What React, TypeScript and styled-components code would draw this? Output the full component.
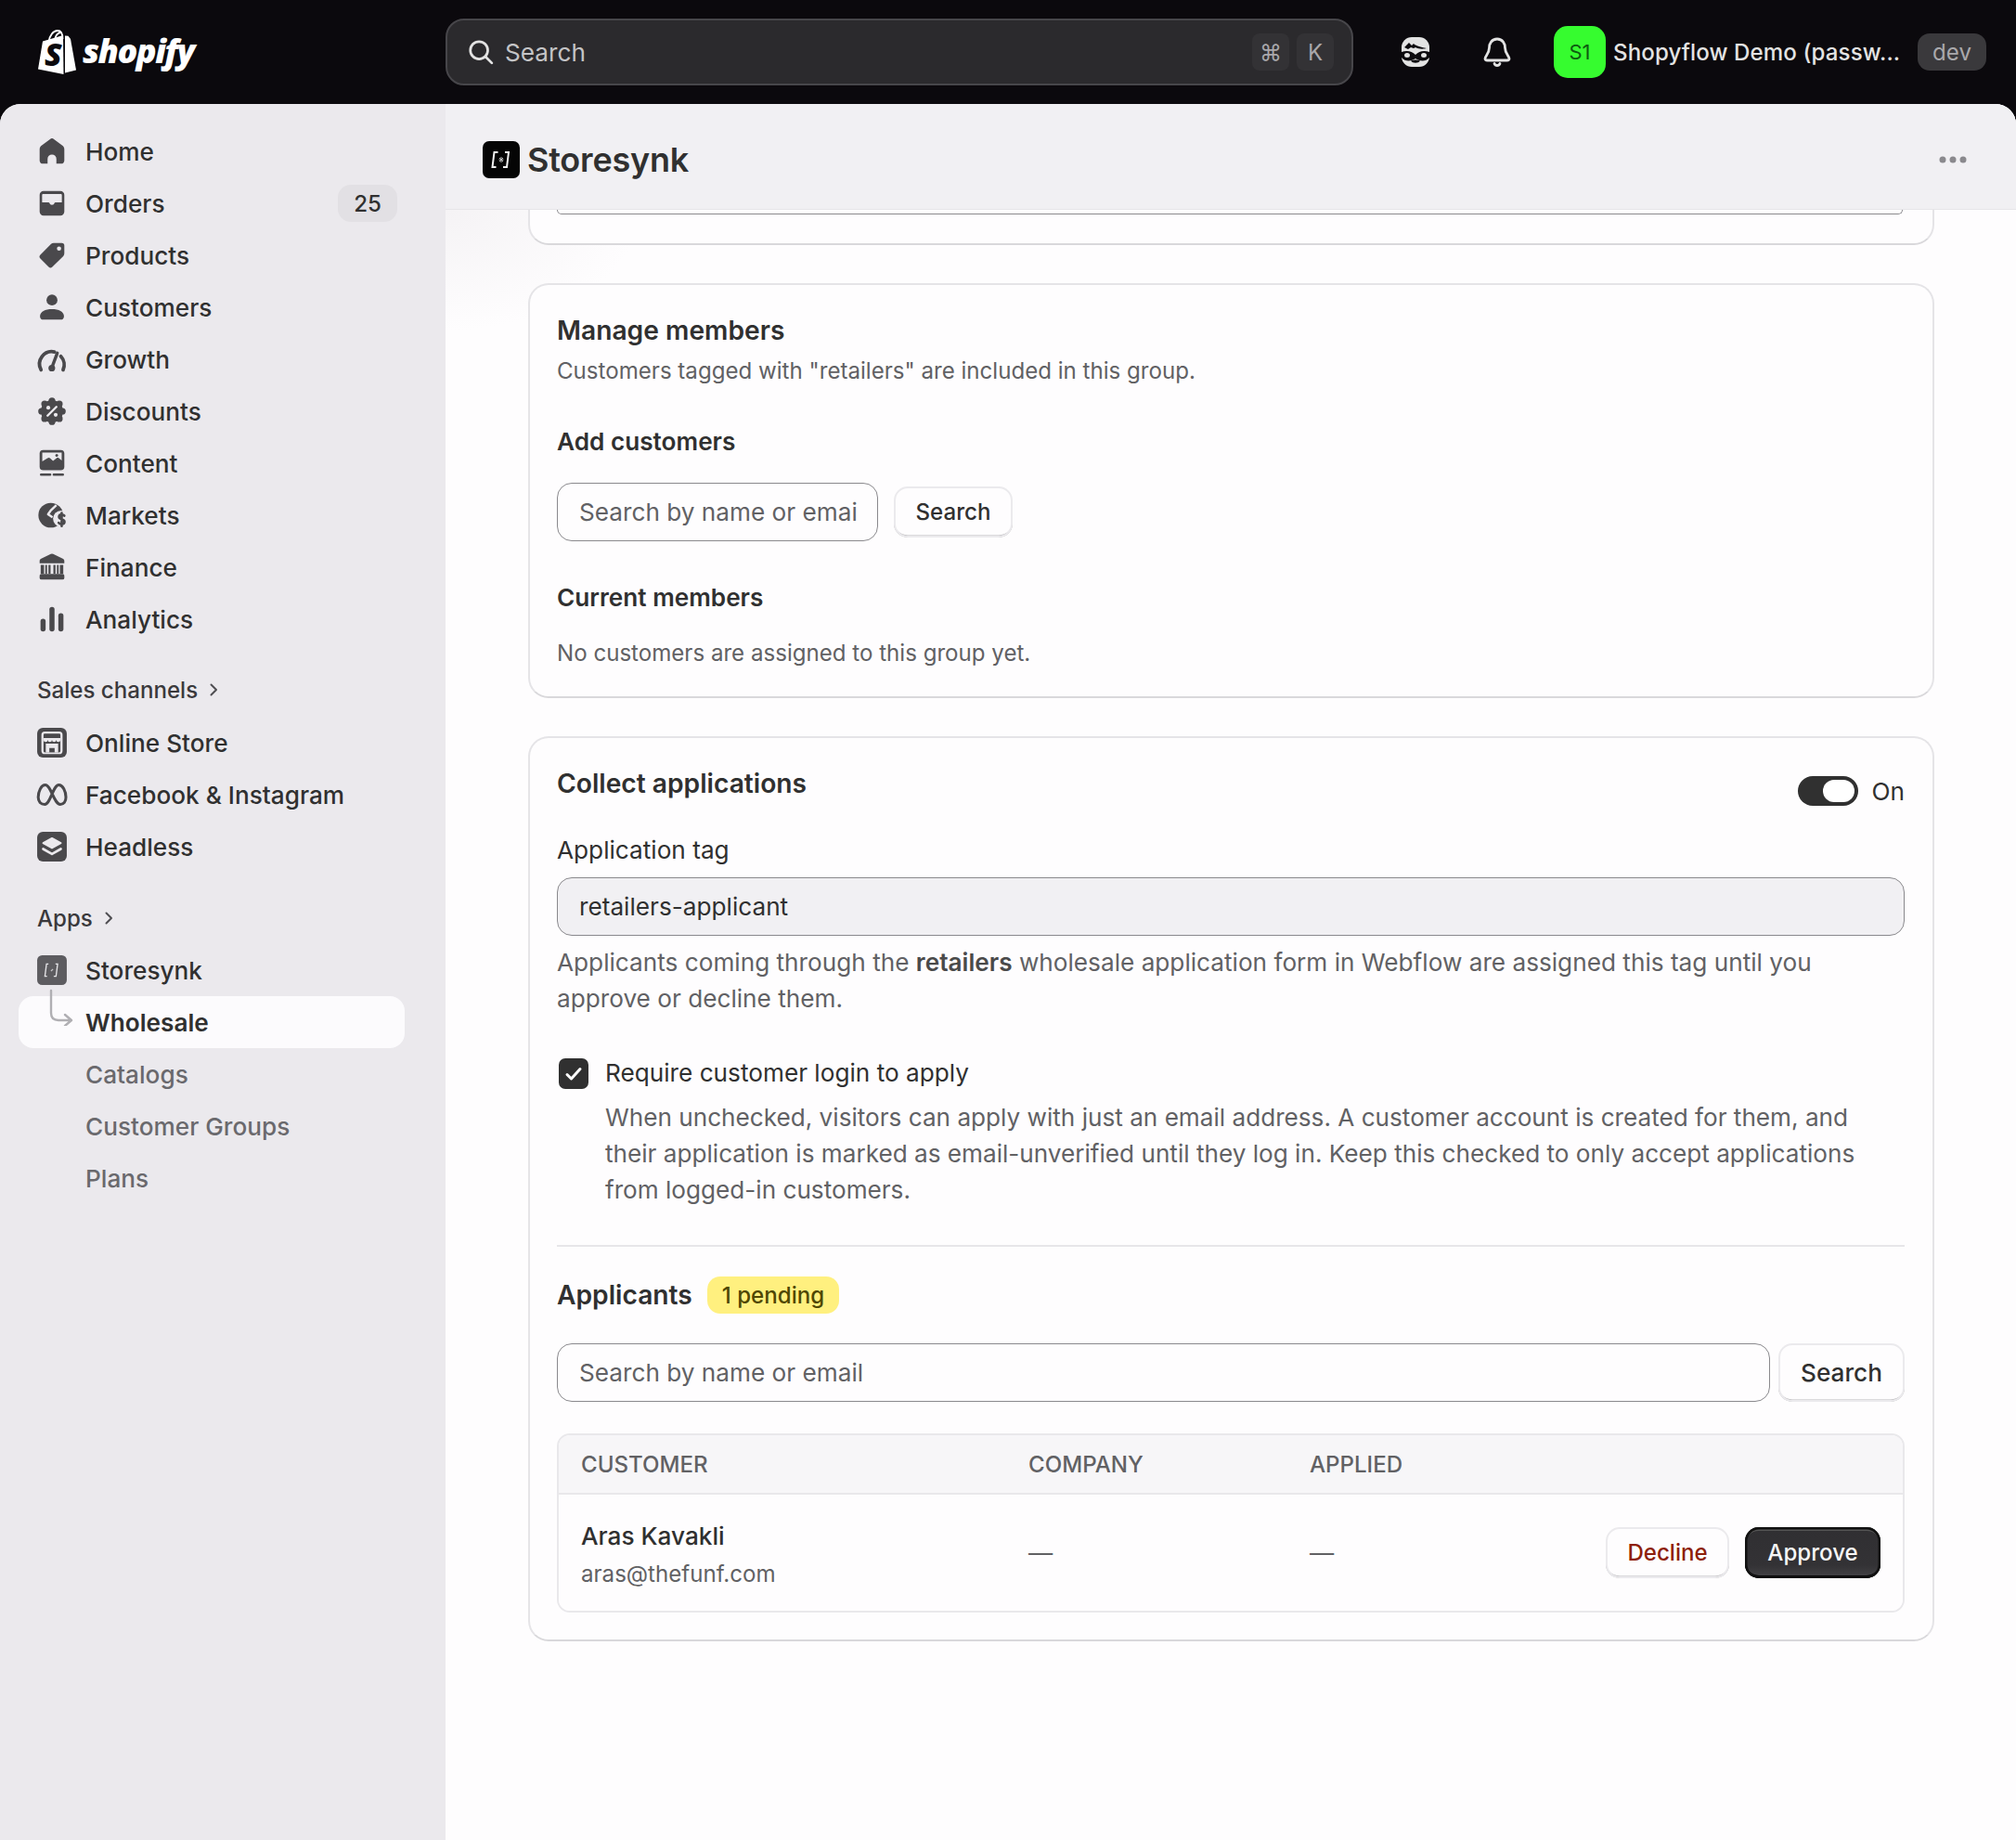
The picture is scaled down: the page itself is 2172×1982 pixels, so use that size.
import React from "react";
import styled, { createGlobalStyle } from "styled-components";

const Global = createGlobalStyle`
  html, body { margin: 0; padding: 0; background: #0b090d; }
  * { box-sizing: border-box; }
  body { font-family: Inter, "Liberation Sans", sans-serif; color: #303030; }
  input { font-family: inherit; }
`;

const Shell = styled.div`
  width: 2172px; height: 1982px; display: flex; flex-direction: column; background: #0b090d; overflow: hidden;
`;
const TopBar = styled.header`
  height: 112px; flex: none; display: flex; align-items: center; position: relative;
`;
const LogoWrap = styled.div`
  width: 480px; flex: none; padding-left: 40px; display: flex; align-items: center; gap: 5px;
`;
const Wordmark = styled.span`
  font-family: "Open Sans", sans-serif; font-style: italic; font-weight: 800; font-size: 36px; letter-spacing: -1.5px; color: #fff; line-height: 1; margin-top: -3px;
`;
const GlobalSearch = styled.div`
  width: 978px; height: 72px; flex: none; background: #2b2a2d; border: 2px solid #47464a; border-radius: 20px;
  display: flex; align-items: center; padding: 0 19px 0 21px; gap: 11px;
`;
const GlobalSearchInput = styled.input`
  flex: 1; min-width: 0; background: none; border: 0; outline: 0; padding: 0; font-size: 26.2px; color: #c4c4c6;
  &::placeholder { color: #c4c4c6; opacity: 1; }
`;
const Kbd = styled.kbd`
  width: 40px; height: 40px; border-radius: 8px; background: #333235; color: #a9a8ab; font-family: Inter, "DejaVu Sans", sans-serif; font-size: 24px;
  display: flex; align-items: center; justify-content: center; margin-left: -3px;
`;
const TopIcon = styled.div<{ $ml: number }>`
  width: 36px; height: 36px; flex: none; margin-left: ${p => p.$ml}px; display: flex; align-items: center; justify-content: center; color: #e3e3e3;
`;
const StoreBadge = styled.div`
  width: 56px; height: 56px; flex: none; margin-left: 43px; border-radius: 15px; background: #36fc2f; color: #0d5a10; font-size: 22px;
  display: flex; align-items: center; justify-content: center;
`;
const StoreName = styled.span`
  width: 310px; margin-left: 8px; flex: none; color: #e3e3e3; font-size: 24.1px; font-weight: 500; letter-spacing: .1px; white-space: nowrap;
`;
const DevChip = styled.span`
  width: 74px; height: 40px; margin-left: 18px; flex: none; border-radius: 13px; background: #3a393c; color: #a9a8ab; font-size: 24.1px;
  display: flex; align-items: center; justify-content: center;
`;
const Body = styled.div`
  flex: 1; display: flex; min-height: 0; border-radius: 22px 22px 0 0; overflow: hidden; background: #fefdfe;
`;
const Sidebar = styled.nav`
  width: 480px; flex: none; background: #ebe9ed; padding-top: 23px;
`;
const NavRow = styled.div<{ $active?: boolean; $muted?: boolean }>`
  height: 56px; margin: 0 44px 0 20px; padding-left: 17px; display: flex; align-items: center; gap: 17px; position: relative;
  font-size: 26.2px; font-weight: ${p => (p.$active ? 600 : 500)}; color: ${p => (p.$muted ? "#6a696d" : "#303030")};
  background: ${p => (p.$active ? "#fcfbfd" : "transparent")}; border-radius: 16px;
`;
const NavIcon = styled.svg`
  width: 38px; height: 38px; flex: none; color: #4a494c;
`;
const NavSpacer = styled.span`
  width: 38px; flex: none;
`;
const NavLabel = styled.span`
  flex: 1; white-space: nowrap;
`;
const CountChip = styled.span`
  width: 64px; height: 40px; margin-right: 8px; border-radius: 14px; background: #e2e0e4; font-size: 24.1px; font-weight: 500;
  display: flex; align-items: center; justify-content: center;
`;
const NavHeading = styled.div<{ $top: number; $bottom: number }>`
  height: 40px; margin: ${p => p.$top}px 0 ${p => p.$bottom}px 40px; display: flex; align-items: center; gap: 8px; font-size: 24.1px; font-weight: 500; color: #3a393c;
`;
const Connector = styled.svg`
  position: absolute; left: 28px; top: -8px; width: 36px; height: 40px;
`;
const Main = styled.main`
  flex: 1; display: flex; flex-direction: column; min-width: 0;
  background: radial-gradient(ellipse 210px 130px at 0 114px, #f5f3f5 0%, #fefdfe 100%);
`;
const PageHeader = styled.div`
  height: 114px; flex: none; background: #f1f0f3; border-bottom: 1px solid #e6e5e8; display: flex; align-items: center; padding: 6px 53px 0 40px;
  position: relative; z-index: 1;
`;
const PageTitle = styled.h1`
  flex: 1; margin: 0 0 0 8px; font-size: 36px; font-weight: 600; color: #303030; letter-spacing: -.2px;
`;
const Content = styled.div`
  padding: 0 88px 0 89px; display: flex; flex-direction: column; gap: 41px;
`;
const Card = styled.section<{ $cut?: boolean }>`
  background: #fefdfe; border: 2px solid #e5e4e7; border-bottom-color: #d9d8db; border-radius: 22px; padding: 31px 30px 29px 29px;
  ${p => p.$cut && "border-top: 0; border-radius: 0 0 22px 22px; padding: 0 30px 0 29px; height: 38px;"}
`;
const CutField = styled.div`
  height: 5px; margin-right: 2px; border: 1.5px solid #8a898d; border-top: 0; border-radius: 0 0 14px 14px;
`;
const Heading = styled.h2`
  margin: 0; font-size: 28.2px; line-height: 36px; font-weight: 600; color: #303030;
`;
const SubHeading = styled.h3<{ $top: number }>`
  margin: ${p => p.$top}px 0 0; font-size: 26.2px; line-height: 36px; font-weight: 600; color: #303030; position: relative; top: 1px;
`;
const Muted = styled.p<{ $top: number }>`
  margin: ${p => p.$top}px 0 0; font-size: 24.1px; line-height: 36px; color: #616164; position: relative; top: 1px;
`;
const FieldRow = styled.div<{ $top: number; $gap: number }>`
  margin-top: ${p => p.$top}px; display: flex; align-items: center; gap: ${p => p.$gap}px;
`;
const TextInput = styled.input<{ $w?: number; $filled?: boolean }>`
  height: 63px; width: ${p => (p.$w ? `${p.$w}px` : "100%")}; flex: ${p => (p.$w ? "none" : "1")}; min-width: 0;
  padding: 0 22px 0 23px; border: 1.5px solid #8a898d; border-radius: 16px; outline: 0; font-size: 26.2px;
  background: ${p => (p.$filled ? "#f1f0f3" : "#fefdfe")}; color: #303030;
  &::placeholder { color: #616164; opacity: 1; }
`;
const Button = styled.button<{ $h: number; $w: number; $size?: number; $danger?: boolean; $primary?: boolean }>`
  width: ${p => p.$w}px; height: ${p => p.$h}px; flex: none; border: 0; border-radius: 15px; font-family: inherit; font-weight: 500;
  font-size: ${p => p.$size ?? 24.1}px; padding: 0; background: ${p => (p.$primary ? "linear-gradient(#302f32, #333235 75%, #454447)" : "#fefdfe")};
  color: ${p => (p.$primary ? "#f6f6f6" : p.$danger ? "#8e1f0b" : "#303030")};
  box-shadow: ${p => (p.$primary
    ? "inset 0 0 0 2.5px #111, inset 0 -3px 0 #000, inset 0 4px 0 #555"
    : "inset 0 0 0 2px #ebeaed, inset 0 -2.5px 0 #b8b7ba")};
`;
const TitleRow = styled.div`
  display: flex; align-items: flex-start; justify-content: space-between;
`;
const SwitchGroup = styled.div`
  margin-top: 8px; display: flex; align-items: center; gap: 15px; font-size: 26.2px; color: #303030; height: 36px;
`;
const SwitchTrack = styled.div`
  width: 65px; height: 32px; border-radius: 16px; background: #303030; padding: 4px; display: flex; justify-content: flex-end;
`;
const SwitchThumb = styled.div`
  width: 34px; height: 24px; border-radius: 12px; background: #fff;
`;
const Label = styled.div`
  margin-top: 28px; font-size: 26.2px; line-height: 36px; color: #303030;
`;
const Help = styled.p`
  margin: 9px 0 0; font-size: 26.2px; line-height: 39px; color: #616164;
  strong { font-weight: 600; color: #4a4a4a; }
`;
const CheckRow = styled.div`
  margin-top: 41px; display: grid; grid-template-columns: 32px 1fr; column-gap: 18px; padding-left: 2px;
`;
const CheckBox = styled.div`
  width: 32px; height: 33px; border-radius: 7px; background: #303030; display: flex; align-items: center; justify-content: center; margin-top: 4px;
`;
const CheckLabel = styled.div`
  font-size: 26.2px; line-height: 39px; color: #303030;
`;
const CheckHelp = styled.p`
  grid-column: 2; margin: 9px 0 0; font-size: 26.15px; line-height: 39px; color: #616164;
`;
const Divider = styled.hr`
  margin: 40px 0 0; border: 0; height: 2px; background: #e7e6e9;
`;
const ApplicantsRow = styled.div`
  margin-top: 32px; height: 40px; display: flex; align-items: center; gap: 16px;
`;
const ApplicantsTitle = styled.h3`
  margin: 0; font-size: 28.2px; font-weight: 600; color: #303030;
`;
const PendingBadge = styled.span`
  height: 40px; padding: 0 16px; border-radius: 14px; background: #fff07f; color: #4f4700; font-size: 24.1px; font-weight: 500; display: flex; align-items: center;
`;
const Table = styled.div`
  margin-top: 34px; border: 2px solid #e9e8eb; border-radius: 14px; overflow: hidden;
`;
const TableGrid = styled.div<{ $head?: boolean }>`
  display: grid; grid-template-columns: 482px 303px 1fr; align-items: center; padding: 0 24px;
  height: ${p => (p.$head ? 64 : 125)}px;
  background: ${p => (p.$head ? "#f7f6f8" : "#fefdfe")};
  border-bottom: ${p => (p.$head ? "2px solid #e9e8eb" : "0")};
`;
const HeadCell = styled.span`
  font-size: 24.1px; font-weight: 500; color: #616164; text-transform: uppercase;
`;
const CustomerCell = styled.div`
  padding-top: 4px;
`;
const CustomerName = styled.div`
  font-size: 26.2px; line-height: 40px; font-weight: 500; color: #303030;
`;
const CustomerEmail = styled.div`
  margin-top: 2px; font-size: 24.1px; line-height: 38px; color: #616164;
`;
const Dash = styled.span`
  font-size: 26.2px; color: #616164;
`;
const RowActions = styled.div`
  display: flex; align-items: center; justify-content: space-between;
`;
const ActionButtons = styled.div`
  margin-left: auto; display: flex; gap: 17px;
`;

const Ico: React.FC<{ children: React.ReactNode }> = ({ children }) => (
  <NavIcon viewBox="0 0 20 20" fill="currentColor">{children}</NavIcon>
);

const BG = "#ebe9ed";
const icons: Record<string, React.ReactNode> = {
  home: <path d="M8.900 3.100a1.800 1.800 0 0 1 2.200 0l4.800 3.600c.7.500 1.100 1.300 1.100 2.100v6.400c0 1-.8 1.800-1.800 1.800h-2.700v-2.700a2.500 2.500 0 0 0-5 0V17H4.800c-1 0-1.800-.8-1.800-1.800V8.800c0-.8.4-1.600 1.100-2.100z" />,
  orders: <path fillRule="evenodd" d="M5.200 3h9.600A2.200 2.200 0 0 1 17 5.200v9.600a2.200 2.200 0 0 1-2.200 2.200H5.200A2.200 2.200 0 0 1 3 14.800V5.200A2.200 2.200 0 0 1 5.200 3zM5 4.700c-.4 0-.6.300-.6.600v4.200H8c.3 0 .5.200.6.400.2.700.7 1 1.400 1s1.200-.3 1.400-1c.1-.2.3-.4.6-.4h3.600V5.300c0-.3-.2-.6-.6-.6z" />,
  products: <path fillRule="evenodd" d="M11 3h4.500A1.500 1.500 0 0 1 17 4.500V9c0 .6-.2 1.100-.6 1.500l-6.200 6.100a1.500 1.500 0 0 1-2.100 0l-4.700-4.700a1.500 1.500 0 0 1 0-2.100l6.100-6.200c.4-.4.900-.6 1.500-.6zm3 2a1.200 1.200 0 1 0 0 2.400A1.200 1.200 0 0 0 14 5z" />,
  customers: <><circle cx="10" cy="5.900" r="3.100" /><path d="M3.200 15.200c0-2.700 3-4.100 6.800-4.100s6.800 1.400 6.800 4.100c0 1-.8 1.800-1.800 1.800H5c-1 0-1.800-.8-1.800-1.800z" /></>,
  growth: <><path d="M3.800 16a7 7 0 0 1 7.600-10.200M15 8.300a7 7 0 0 1 1.300 7.700" fill="none" stroke="currentColor" strokeWidth="2" strokeLinecap="round" /><path d="M13 6.500l-3 8" stroke="currentColor" strokeWidth="1.800" strokeLinecap="round" /><circle cx="9.900" cy="15" r="1.900" /></>,
  discounts: <><circle cx="10" cy="10" r="6.300" />{[0, 45, 90, 135, 180, 225, 270, 315].map(a => <circle key={a} cx={10 + 5.9 * Math.cos(a * Math.PI / 180)} cy={10 + 5.9 * Math.sin(a * Math.PI / 180)} r="1.900" />)}<circle cx="7.900" cy="8" r="1.100" fill={BG} /><circle cx="12.100" cy="12" r="1.100" fill={BG} /><path d="M12.500 7.500l-5 5" stroke={BG} strokeWidth="1.300" strokeLinecap="round" /></>,
  content: <><rect x="3" y="2.500" width="14" height="11.500" rx="2" /><path d="M4.500 4h11v4.400l-1.600-1.300c-.4-.3-.9-.3-1.300 0l-2 1.600-1.700-1.600c-.4-.4-1-.4-1.400 0L4.500 9z" fill={BG} /><circle cx="12.700" cy="5.500" r=".8" /><path d="M3.800 16.500h5.200M11 16.500h5.200" stroke="currentColor" strokeWidth="1.300" strokeLinecap="round" /></>,
  markets: <><circle cx="9.300" cy="10" r="7" /><circle cx="15.200" cy="12" r="4.600" fill={BG} /><path d="M12.500 4.300 9.300 7.300 7.800 9.500l2.500 1.700" stroke={BG} strokeWidth="1.300" fill="none" strokeLinejoin="round" /><path d="M17 10.300c-.5-.8-3-1-3 .6s3.100 1.100 3.100 2.800c0 1.700-2.700 1.600-3.300.6M15.500 8.700v7.500" fill="none" stroke="currentColor" strokeWidth="1.400" strokeLinecap="round" /></>,
  finance: <><path d="M9.300 2.500a1.600 1.600 0 0 1 1.400 0l5.400 2.600c.6.300.9.800.9 1.400v1.300H3V6.500c0-.6.300-1.100.9-1.400z" /><rect x="3" y="13.800" width="14" height="3.200" rx="1" /><rect x="3.600" y="8.700" width="1.900" height="5" /><rect x="6.200" y="8.700" width="1" height="5" /><rect x="8" y="8.700" width="1.200" height="5" /><rect x="10.800" y="8.700" width="1.200" height="5" /><rect x="12.800" y="8.700" width="1" height="5" /><rect x="14.500" y="8.700" width="1.900" height="5" /></>,
  analytics: <><rect x="3.500" y="9.800" width="2.900" height="7.200" rx="1.450" /><rect x="8.550" y="3" width="2.900" height="14" rx="1.450" /><rect x="13.600" y="6.600" width="2.900" height="10.400" rx="1.450" /></>,
  store: <><rect x="1.600" y="1.600" width="16.800" height="16.800" rx="3.200" /><rect x="4" y="3.700" width="12" height="12.800" rx="1.900" fill={BG} /><rect x="5.200" y="4.900" width="9.600" height="10.600" rx=".7" /><path d="M5.200 7.400h9.600v1a1.200 1.200 0 0 1-2.400 0 1.200 1.200 0 0 1-2.400 0 1.200 1.200 0 0 1-2.400 0 1.200 1.200 0 0 1-2.400 0z" fill={BG} /><path d="M6.500 10.500h7v5h-2v-2.500h-3v2.500h-2z" fill={BG} /></>,
  meta: <path d="M5.900 15.500c-2.200 0-3.700-1.500-3.700-4 0-3.300 1.700-7 4-7 3.200 0 5 11 8.500 11 2 0 3.200-1.600 3.200-4 0-3.300-1.800-7-4-7-3.300 0-4.800 11-8 11z" fill="none" stroke="currentColor" strokeWidth="1.600" strokeLinejoin="round" />,
  headless: <><rect x="1.600" y="1.600" width="16.800" height="16.800" rx="3.200" /><path d="M10 5.200l5 2.800-5 2.800L5 8z" fill={BG} stroke={BG} strokeWidth="1" strokeLinejoin="round" /><path d="M5 11.300l5 2.800 5-2.800" fill="none" stroke={BG} strokeWidth="1.400" strokeLinejoin="round" strokeLinecap="round" /></>,
  app: <><rect x="1.600" y="1.600" width="16.800" height="16.800" rx="2.800" fill="#5d5c60" /><path d="M8 6.500H6.900L6 13.500h1.200M12 6.500h1.200l-.9 7H11" fill="none" stroke="#e6e5e8" strokeWidth=".7" /><path d="M9.400 10.500l1.200-1" stroke="#c7c6c9" strokeWidth=".6" /></>,
};

const Chevron = () => (
  <svg width="18" height="18" viewBox="0 0 18 18" fill="none" stroke="#4f4e52" strokeWidth="2" strokeLinecap="round" strokeLinejoin="round"><path d="M6.500 3.500 12 9l-5.500 5.500" /></svg>
);

const Item: React.FC<{ icon?: string; label: string; count?: string; active?: boolean; muted?: boolean; tree?: boolean }> = ({ icon, label, count, active, muted, tree }) => (
  <NavRow $active={active} $muted={muted}>
    {tree && (
      <Connector viewBox="0 0 36 40" fill="none" stroke="#b0afb3" strokeWidth="2.400" strokeLinecap="round" strokeLinejoin="round">
        <path d="M7 2v24q0 8 8 8h13M22 28l7 6-7 6" />
      </Connector>
    )}
    {icon ? <Ico>{icons[icon]}</Ico> : <NavSpacer />}
    <NavLabel>{label}</NavLabel>
    {count && <CountChip>{count}</CountChip>}
  </NavRow>
);

export default function App() {
  return (
    <Shell>
      <Global />
      <TopBar>
        <LogoWrap>
          <svg width="44" height="50" viewBox="0 0 44 50">
            <path d="M28 7 6 13.500 1 43.500 28.500 49z" fill="#fff" />
            <path d="M30 7.500l3.500.3L36 11l6 33.500L30 47.500z" fill="#fff" />
            <path d="M12.500 14C13.500 7 17.500 2 22 2c3.500 0 5.500 3 5.500 9M19 12c.8-4.500 3-7.500 6-8" fill="none" stroke="#fff" strokeWidth="1.800" />
            <text x="8" y="40" fontFamily="Open Sans, sans-serif" fontStyle="italic" fontWeight="800" fontSize="34" fill="#0b090d">S</text>
          </svg>
          <Wordmark>shopify</Wordmark>
        </LogoWrap>
        <GlobalSearch>
          <svg width="30" height="30" viewBox="0 0 24 24" fill="none" stroke="#e3e3e3" strokeWidth="2.200" strokeLinecap="round"><circle cx="10.500" cy="10.500" r="7.500" /><path d="m16 16 5.500 5.500" /></svg>
          <GlobalSearchInput readOnly placeholder="Search" />
          <Kbd>⌘</Kbd>
          <Kbd>K</Kbd>
        </GlobalSearch>
        <TopIcon $ml={49}>
          <svg width="30" height="32" viewBox="0 0 30 32">
            <rect width="30" height="32" rx="11" fill="#e3e3e3" />
            <path d="M3 11 8 6l3 3 2-2c3 3 8 4 14 5-3 1-9 1-12-1l-2 1-3-1-3 2z" fill="#0b090d" />
            <path d="M0 16c6-2 11-1 15 3 4-4 9-5 15-3v6c-4 5-11 4-15 1-4 3-11 4-15-1z" fill="#0b090d" />
            <ellipse cx="6" cy="19.500" rx="3" ry="2.500" fill="#e3e3e3" /><ellipse cx="24" cy="19.500" rx="3" ry="2.500" fill="#e3e3e3" />
            <path d="M10 25.500c2 3 8 3 10 0-3-1.500-7-1.500-10 0z" fill="#0b090d" />
          </svg>
        </TopIcon>
        <TopIcon $ml={52}>
          <svg width="32" height="34" viewBox="0 0 32 34" fill="none" stroke="#e3e3e3" strokeWidth="2.800" strokeLinejoin="round" strokeLinecap="round">
            <path d="M16 3c-6 0-8.500 5-8.500 9.500 0 6-4.500 9-4.500 11.500 0 1.300 1 2 2.500 2h21c1.500 0 2.500-.7 2.500-2 0-2.500-4.500-5.500-4.500-11.500C24.500 8 22 3 16 3z" />
            <path d="M13 29.500c.6 1.500 1.600 2 3 2s2.400-.5 3-2" />
          </svg>
        </TopIcon>
        <StoreBadge>S1</StoreBadge>
        <StoreName>Shopyflow Demo (passw...</StoreName>
        <DevChip>dev</DevChip>
      </TopBar>
      <Body>
        <Sidebar>
          <Item icon="home" label="Home" />
          <Item icon="orders" label="Orders" count="25" />
          <Item icon="products" label="Products" />
          <Item icon="customers" label="Customers" />
          <Item icon="growth" label="Growth" />
          <Item icon="discounts" label="Discounts" />
          <Item icon="content" label="Content" />
          <Item icon="markets" label="Markets" />
          <Item icon="finance" label="Finance" />
          <Item icon="analytics" label="Analytics" />
          <NavHeading $top={28} $bottom={9}>Sales channels <Chevron /></NavHeading>
          <Item icon="store" label="Online Store" />
          <Item icon="meta" label="Facebook & Instagram" />
          <Item icon="headless" label="Headless" />
          <NavHeading $top={29} $bottom={8}>Apps <Chevron /></NavHeading>
          <Item icon="app" label="Storesynk" />
          <Item label="Wholesale" active tree />
          <Item label="Catalogs" muted />
          <Item label="Customer Groups" muted />
          <Item label="Plans" muted />
        </Sidebar>
        <Main>
          <PageHeader>
            <svg width="40" height="40" viewBox="0 0 40 40">
              <rect width="40" height="40" rx="7" fill="#050505" />
              <path d="M16.500 12h-4l-2 16h4M24 12h4l-2 16h-4" fill="none" stroke="#f2f2f2" strokeWidth="2" />
              <path d="M20 17v6M17.500 20h5M18 18l4 4M22 18l-4 4" stroke="#bdbdbd" strokeWidth="1" />
            </svg>
            <PageTitle>Storesynk</PageTitle>
            <svg width="30" height="8" viewBox="0 0 30 8" fill="#8a898d"><circle cx="4" cy="4" r="3.500" /><circle cx="15" cy="4" r="3.500" /><circle cx="26" cy="4" r="3.500" /></svg>
          </PageHeader>
          <Content>
            <Card $cut><CutField /></Card>
            <Card>
              <Heading>Manage members</Heading>
              <Muted $top={7}>Customers tagged with "retailers" are included in this group.</Muted>
              <SubHeading $top={40}>Add customers</SubHeading>
              <FieldRow $top={27} $gap={17}>
                <TextInput $w={346} readOnly placeholder="Search by name or email" />
                <Button $w={128} $h={55}>Search</Button>
              </FieldRow>
              <SubHeading $top={42}>Current members</SubHeading>
              <Muted $top={24}>No customers are assigned to this group yet.</Muted>
            </Card>
            <Card>
              <TitleRow>
                <Heading>Collect applications</Heading>
                <SwitchGroup>
                  <SwitchTrack><SwitchThumb /></SwitchTrack>
                  On
                </SwitchGroup>
              </TitleRow>
              <Label>Application tag</Label>
              <FieldRow $top={11} $gap={0}><TextInput $filled readOnly value="retailers-applicant" /></FieldRow>
              <Help>Applicants coming through the <strong>retailers</strong> wholesale application form in Webflow are assigned this tag until you approve or decline them.</Help>
              <CheckRow>
                <CheckBox>
                  <svg width="20" height="18" viewBox="0 0 20 18" fill="none" stroke="#fff" strokeWidth="3" strokeLinecap="round" strokeLinejoin="round"><path d="m3 9.500 4.500 4.500L17 3.500" /></svg>
                </CheckBox>
                <CheckLabel>Require customer login to apply</CheckLabel>
                <CheckHelp>When unchecked, visitors can apply with just an email address. A customer account is created for them, and their application is marked as email-unverified until they log in. Keep this checked to only accept applications from logged-in customers.</CheckHelp>
              </CheckRow>
              <Divider />
              <ApplicantsRow>
                <ApplicantsTitle>Applicants</ApplicantsTitle>
                <PendingBadge>1 pending</PendingBadge>
              </ApplicantsRow>
              <FieldRow $top={32} $gap={9}>
                <TextInput readOnly placeholder="Search by name or email" />
                <Button $w={136} $h={63} $size={26.2}>Search</Button>
              </FieldRow>
              <Table>
                <TableGrid $head>
                  <HeadCell>Customer</HeadCell>
                  <HeadCell>Company</HeadCell>
                  <HeadCell>Applied</HeadCell>
                </TableGrid>
                <TableGrid>
                  <CustomerCell>
                    <CustomerName>Aras Kavakli</CustomerName>
                    <CustomerEmail>aras@thefunf.com</CustomerEmail>
                  </CustomerCell>
                  <Dash>—</Dash>
                  <RowActions>
                    <Dash>—</Dash>
                    <ActionButtons>
                      <Button $w={133} $h={55} $danger>Decline</Button>
                      <Button $w={146} $h={55} $primary>Approve</Button>
                    </ActionButtons>
                  </RowActions>
                </TableGrid>
              </Table>
            </Card>
          </Content>
        </Main>
      </Body>
    </Shell>
  );
}
